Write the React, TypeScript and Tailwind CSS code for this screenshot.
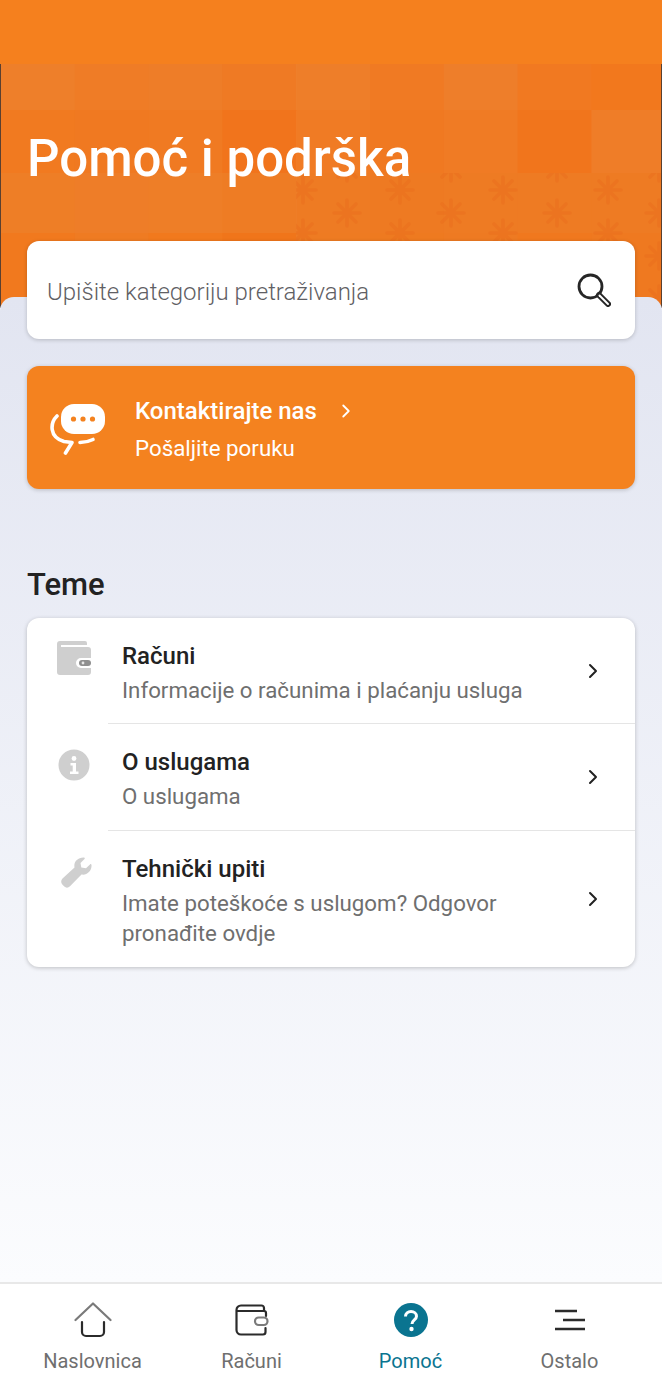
import React from 'react';
import { ChevronRight } from 'lucide-react';

const tiles = [
    { h: 46, colors: ['#ee7f2a', '#ef7c26', '#ee7d28', '#ef7a24', '#ee7e29', '#f07a23', '#ee7e2a', '#f17921', '#f2781d'] },
    { h: 63, colors: ['#f17a20', '#f07921', '#f07a22', '#f1741c', '#f07b24', '#f07921', '#f07b24', '#f1751c', '#ef7d28'] },
    { h: 60, colors: ['#ee7e26', '#ee7d28', '#ee7e27', '#ee7c24', '#ee7b23', '#ee7a22', '#ee7b23', '#ee7b23', '#ee7b23'] },
    { h: 75, colors: ['#f1791e', '#ef7b22', '#f1791d', '#f0751a', '#ee7b22', '#ee7a20', '#ee7a22', '#f0781e', '#ef7920'] },
];

const stars: [number, number][] = [];
[190, 233, 276].forEach(y => [302, 399, 502, 607].forEach(x => stars.push([x, y])));
[168, 213, 256, 299].forEach(y => [346, 450, 556, 658].forEach(x => stars.push([x, y])));

const HeroPattern = () => (
    <svg className="absolute inset-0" width="662" height="244" viewBox="0 64 662 244" aria-hidden="true">
        <defs>
            <clipPath id="starArea">
                <rect x="295" y="173" width="367" height="135" />
            </clipPath>
        </defs>
        {tiles.map((row, r) => {
            const y = 64 + tiles.slice(0, r).reduce((sum, t) => sum + t.h, 0);
            return row.colors.map((c, i) => (
                <rect key={`${r}-${i}`} x={i * 73.8} y={y} width="74.5" height={row.h + 1} fill={c} />
            ));
        })}
        <g clipPath="url(#starArea)">
            {stars.map(([x, y]) => (
                <path
                    key={`${x}-${y}`}
                    d={`M${x - 13} ${y}H${x + 13}M${x} ${y - 13}V${y + 13}M${x - 9} ${y - 9}L${x + 9} ${y + 9}M${x - 9} ${y + 9}L${x + 9} ${y - 9}`}
                    stroke="#e8681a"
                    strokeWidth="3.6"
                    strokeLinecap="round"
                    opacity="0.32"
                />
            ))}
        </g>
    </svg>
);

const ChatIcon = () => (
    <svg width="60" height="54" viewBox="0 0 60 54" fill="none">
        <rect x="12" y="3" width="44" height="30" rx="13" fill="#fff" />
        <circle cx="24.500" cy="18" r="2.6" fill="#f4821f" />
        <circle cx="34" cy="18" r="2.6" fill="#f4821f" />
        <circle cx="43.500" cy="18" r="2.6" fill="#f4821f" />
        <path d="M8 15C1 22 0 36 15 40.500L23 41.500L16.500 52" stroke="#fff" strokeWidth="3.600" strokeLinecap="round" strokeLinejoin="round" />
        <path d="M31 41.500C36 41.500 40 40.500 44 38.500" stroke="#fff" strokeWidth="3.600" strokeLinecap="round" />
    </svg>
);

const WalletFill = () => (
    <svg width="34" height="34" viewBox="0 0 34 34">
        <path d="M3 0H28a2 2 0 0 1 2 2V4H4V6H31a3 3 0 0 1 3 3V17H24a5 5 0 0 0 0 10H34V31a3 3 0 0 1-3 3H3a3 3 0 0 1-3-3V3a3 3 0 0 1 3-3Z" fill="#cfcfcf" />
        <rect x="22" y="19" width="12" height="6" rx="3" fill="#8f8f8f" />
        <circle cx="26" cy="22" r="1.4" fill="#e6e6e6" />
    </svg>
);

const InfoFill = () => (
    <svg width="32" height="32" viewBox="0 0 32 32">
        <circle cx="16" cy="16" r="15.5" fill="#cfcfcf" />
        <circle cx="16" cy="9.5" r="2.4" fill="#fff" />
        <path d="M12.5 14H18V22.5H20.5V25H12V22.5H14.7V16.5H12.5Z" fill="#fff" />
    </svg>
);

const WrenchFill = () => (
    <svg width="31" height="31" viewBox="0 0 31 31">
        <path d="M22.500 0.500C16.500 0.500 12.500 5 13.500 10.500L1.500 21.500C-0.300 23.500 -0.200 26 1.500 27.700L3.300 29.500C5 31.100 7.300 31 9 29.200L20.500 17.500C26 18.500 31 14 30.500 8C30.400 7 29.600 6.800 29 7.400L25 11.300L20.300 10.400L19.500 6L23.500 2C24.200 1.200 23.700 0.500 22.500 0.500Z" fill="#cfcfcf" />
    </svg>
);

const topics = [
    { title: 'Računi', sub: ['Informacije o računima i plaćanju usluga'], icon: <WalletFill />, iconCls: 'pl-[30px] pt-[23px]', h: 'h-[105px]' },
    { title: 'O uslugama', sub: ['O uslugama'], icon: <InfoFill />, iconCls: 'pl-[31px] pt-[25px]', h: 'h-[106px]' },
    { title: 'Tehnički upiti', sub: ['Imate poteškoće s uslugom? Odgovor', 'pronađite ovdje'], icon: <WrenchFill />, iconCls: 'pl-[34px] pt-[26px]', h: 'h-[136px]' },
];

const navItems = [
    {
        label: 'Naslovnica',
        icon: (
            <svg width="38" height="36" viewBox="0 0 38 36" fill="none" strokeWidth="2.2" strokeLinecap="round" strokeLinejoin="round">
                <path d="M1.5 18L19 1.5L36.5 18" stroke="#7a7a7a" />
                <path d="M8 20V30a4 4 0 0 0 4 4H26a4 4 0 0 0 4-4V20" stroke="#2b2b2b" />
            </svg>
        ),
    },
    {
        label: 'Računi',
        icon: (
            <svg width="34" height="32" viewBox="0 0 34 32" fill="none" strokeWidth="2.2" strokeLinecap="round" strokeLinejoin="round">
                <path d="M29 7V4a2.5 2.5 0 0 0-2.500-2.500H6A4.500 4.500 0 0 0 1.500 6V26A4.500 4.500 0 0 0 6 30.500H28a2.500 2.500 0 0 0 2.500-2.500V24" stroke="#2b2b2b" />
                <path d="M2 7H29a2 2 0 0 1 2 2V12" stroke="#2b2b2b" />
                <rect x="20" y="13.500" width="12.500" height="7.500" rx="3.700" stroke="#7a7a7a" />
            </svg>
        ),
    },
    {
        label: 'Pomoć',
        active: true,
        icon: (
            <svg width="34" height="34" viewBox="0 0 34 34">
                <circle cx="17" cy="17" r="17" fill="#0a7490" />
                <path d="M11.500 13.500C11.500 10.500 14 8.500 17 8.500S22.500 10.500 22.500 13.300C22.500 17 18 17 18 21" fill="none" stroke="#fff" strokeWidth="3" />
                <circle cx="17.500" cy="26" r="2.200" fill="#fff" />
            </svg>
        ),
    },
    {
        label: 'Ostalo',
        icon: (
            <svg width="32" height="22" viewBox="0 0 32 22" fill="none" stroke="#2b2b2b" strokeWidth="2.400">
                <path d="M1 2H23M9 11H31M1 20H31" />
            </svg>
        ),
    },
];

export default function App() {
    return (
        <div className="h-[1396px] w-[662px] flex flex-col overflow-hidden bg-white font-['Roboto',sans-serif]">
            <div className="h-[64px] bg-[#f5801e]" />

            <div className="relative h-[244px] shrink-0 border-x border-[#5a4030] border-b border-b-[#8a8f9c] overflow-hidden">
                <HeroPattern />
                <h1 className="relative pl-[26px] pt-[64px] text-[51px] leading-[61px] font-medium text-white">Pomoć i podrška</h1>
            </div>

            <main className="relative flex-1 -mt-[11px] rounded-t-[14px] bg-gradient-to-b from-[#e2e5f1] to-[#fbfcfe] px-[27px]">
                <div className="-mt-[56px] h-[98px] rounded-[12px] bg-white shadow-[0_1px_4px_rgba(0,0,0,0.2)] flex items-center justify-between pl-[20px] pr-[24px]">
                    <span className="pt-[4px] text-[24px] font-light text-[#5f6064]">Upišite kategoriju pretraživanja</span>
                    <svg width="34" height="34" viewBox="0 0 34 34" fill="none" stroke="#262626">
                        <circle cx="13.500" cy="13.500" r="11.500" strokeWidth="2.800" />
                        <path d="M22 22L31 31" strokeWidth="6" strokeLinecap="round" />
                        <path d="M22.500 22.500L31 31" stroke="#fff" strokeWidth="2" strokeLinecap="round" />
                    </svg>
                </div>

                <div className="mt-[27px] h-[123px] rounded-[12px] bg-[#f4821f] shadow-[0_1px_4px_rgba(0,0,0,0.2)] flex items-center pl-[22px]">
                    <ChatIcon />
                    <div className="ml-[26px] pt-[4px] text-white">
                        <div className="flex items-center text-[24px] leading-[30px] font-medium">
                            Kontaktirajte nas
                            <ChevronRight size={22} strokeWidth={2} className="ml-[18px]" />
                        </div>
                        <div className="mt-[8px] text-[22.3px] leading-[29px]">Pošaljite poruku</div>
                    </div>
                </div>

                <h2 className="mt-[78px] text-[31px] leading-[36px] font-medium text-[#222]">Teme</h2>

                <div className="mt-[15px] rounded-[12px] bg-white shadow-[0_1px_4px_rgba(0,0,0,0.22)]">
                    {topics.map(t => (
                        <div key={t.title} className={`flex ${t.h}`}>
                            <div className={`w-[95px] shrink-0 ${t.iconCls}`}>{t.icon}</div>
                            <div className="flex-1 flex">
                                <div className="flex-1 pt-[22px]">
                                    <div className="text-[24px] leading-[32px] font-medium text-[#222]">{t.title}</div>
                                    <div className="mt-[4px] text-[22.3px] leading-[29.5px] text-[#6f6f6f]">
                                        {t.sub.map(s => <div key={s}>{s}</div>)}
                                    </div>
                                </div>
                                <div className="w-[54px] flex items-center">
                                    <ChevronRight size={24} strokeWidth={2} className="text-[#222]" />
                                </div>
                            </div>
                        </div>
                    )).reduce<React.ReactNode[]>((acc, row, i) => {
                        if (i > 0) acc.push(<div key={`d${i}`} className="ml-[81px] h-px bg-[#e5e5e5]" />);
                        acc.push(row);
                        return acc;
                    }, [])}
                </div>
            </main>

            <nav className="h-[114px] shrink-0 border-t-2 border-[#e8e8e8] bg-white grid grid-cols-4 px-[13px]">
                {navItems.map(item => (
                    <div key={item.label} className="flex flex-col items-center">
                        <div className="h-[36px] mt-[18px] flex items-center justify-center">{item.icon}</div>
                        <div className={`mt-[9px] text-[20px] leading-[28px] ${item.active ? 'text-[#0a7490]' : 'text-[#6f6f6f]'}`}>{item.label}</div>
                    </div>
                ))}
            </nav>
        </div>
    );
}
